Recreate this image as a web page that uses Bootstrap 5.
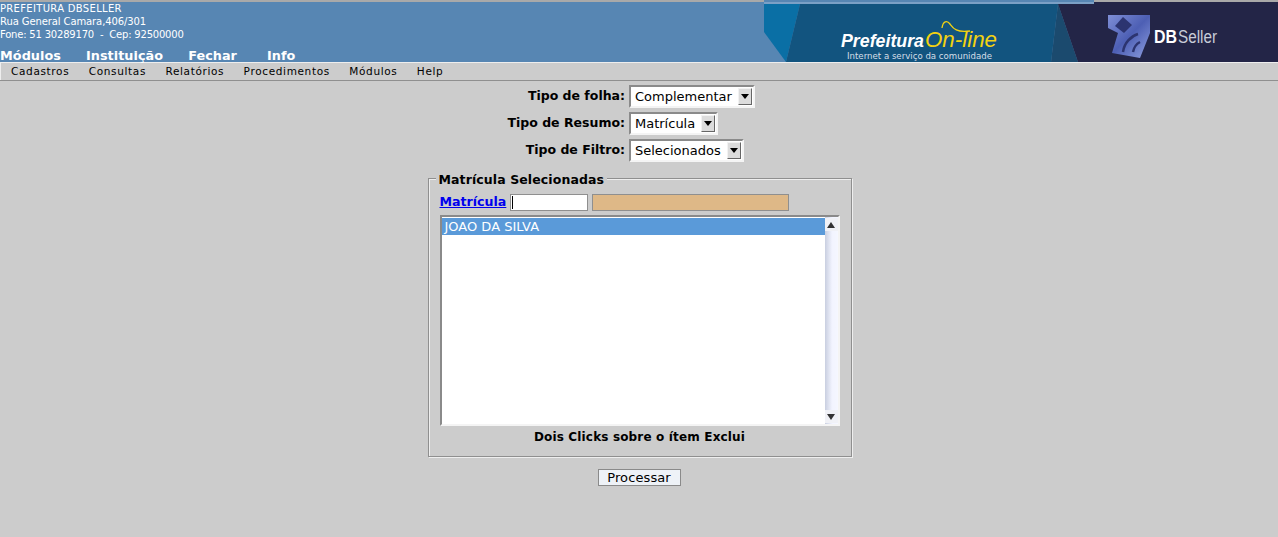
<!doctype html>
<html lang="pt">
<head>
<meta charset="utf-8">
<title>Prefeitura</title>
<link rel="stylesheet" href="https://cdn.jsdelivr.net/npm/bootstrap@5.3.0/dist/css/bootstrap.min.css">
<style>
html,body{height:100%}
body{background:#cccccc;font-family:"DejaVu Sans",sans-serif;color:#000;font-size:13px;overflow:hidden}
.hdr{height:62px;background:#5786b3;border-top:2px solid #a9a9a9;color:#fff}
.hdr-info{font-size:10px;line-height:13px;white-space:nowrap}
.hi1{letter-spacing:.32px}
.hi2{letter-spacing:-.1px}
.hi3{letter-spacing:-.2px}
.hdr-nav{font-size:12.8px;font-weight:700;line-height:15px;margin-top:7px;column-gap:25px;letter-spacing:.05px}
.nav-last{margin-left:5px}
.banner{width:514px;height:62px;margin-top:-2px;flex:none;display:block}
.submenu{height:19px;background:#cccccc;border-bottom:1px solid #8f8f8f;padding-left:11px;font-size:10.5px;line-height:18px;letter-spacing:.65px;column-gap:19.4px;box-shadow:inset 1px 1px 0 #eee}
.frm{padding-top:4px}
.sel-grid{width:100%;display:grid;grid-template-columns:625px auto;column-gap:4px;row-gap:4px;align-items:center}
.lbl{font-weight:700;font-size:12.5px;text-align:right}
.sel{height:23px;width:max-content;background:#fff;border:2px solid;border-color:#8a8a8a #f4f4f4 #f4f4f4 #8a8a8a;font-size:13px;padding-left:4px;column-gap:6px}
.sel-btn{width:14px;height:17px;background:#dcdcdc;border:1px solid;border-color:#f2f2f2 #666 #666 #f2f2f2;margin-right:1px}
.sel-btn::after{content:"";border:4px solid transparent;border-top:5px solid #000;border-bottom:0}
.fset{width:424px;height:279px;margin:16px 0 0 1px;border:1px solid #8f8f8f;box-shadow:inset 1px 1px 0 #eee,1px 1px 0 #eee;padding:15px 11px 0 11px;position:relative}
.fset-title{position:absolute;left:7px;top:-7px;background:#ccc;padding:0 3px;font-weight:700;font-size:12.5px;line-height:15px;letter-spacing:.1px}
.lnk{color:#0000ee;font-weight:700;text-decoration:underline;font-size:12.6px}
.fline{column-gap:4px;height:17px}
.inp1{width:78px;height:17px;background:#fff;border:1px solid #8f8f8f;padding:1px 0 1px 1px}
.inp1::before{content:"";display:block;width:1px;height:100%;background:#000}
.inp2{width:197px;height:17px;background:#deb887;border:1px solid #8f8f8f}
.lst{width:400px;height:211px;margin-top:4px;border:2px solid;border-color:#8a8a8a #f4f4f4 #f4f4f4 #8a8a8a;background:#fff;overflow:hidden}
.lst-body{flex:1 1 auto}
.lst-item{height:17px;background:#5a9ad9;color:#fff;font-size:13px;line-height:17px;padding-left:3px;margin:1px 0 0 0}
.sbar{width:13px;padding:1px 0;background:linear-gradient(90deg,#c9cfe0,#f2f4ff 55%,#f5f7ff)}
.sarrow{height:13px;background:#f0f1f6}
.up::after{content:"";border:4px solid transparent;border-bottom:6px solid #333;border-top:0}
.dn::after{content:"";border:4px solid transparent;border-top:6px solid #333;border-bottom:0}
.hint{font-weight:700;font-size:12px;line-height:15px;margin-top:4px;letter-spacing:.16px}
.proc{width:83px;height:17px;margin-top:12px;border:1px solid #8a8a8a;background:#eef2f7;color:#000;font-size:13px;line-height:15px;padding:0;border-radius:0;letter-spacing:.1px}
</style>
</head>
<body>
<header class="hdr d-flex justify-content-between">
  <div>
    <div class="hdr-info"><div class="hi1">PREFEITURA DBSELLER</div><div class="hi2">Rua General Camara,406/301</div><div class="hi3">Fone: 51 30289170&nbsp; -&nbsp; Cep: 92500000</div></div>
    <nav class="hdr-nav d-flex"><span>Módulos</span><span>Instituição</span><span>Fechar</span><span class="nav-last">Info</span></nav>
  </div>
  <svg class="banner" viewBox="0 0 514 62" role="img" aria-label="Prefeitura On-line DBSeller">
    <defs>
      <linearGradient id="lg" x1="0" y1="0" x2="1" y2="1"><stop offset="0" stop-color="#7f8fd6"/><stop offset=".5" stop-color="#4d5fb4"/><stop offset="1" stop-color="#8e9fe0"/></linearGradient>
    </defs>
    <rect width="330" height="62" fill="#5786b3"/>
    <rect y="2" width="330" height="2" fill="#7ba0c6"/>
    <polygon points="0,4 36,4 22,62 0,32" fill="#0a6fa5"/>
    <polygon points="36,4 294,4 287,62 22,62" fill="#12547f"/>
    <polygon points="294,4 314,62 287,62" fill="#1b4a6e"/>
    <polygon points="294,4 330,4 330,2 514,2 514,62 314,62" fill="#232547"/>
    <text x="77" y="47" font-family="Liberation Sans" font-style="italic" font-weight="700" font-size="19" textLength="83" lengthAdjust="spacingAndGlyphs" fill="#fff">Prefeitura</text>
    <text x="161" y="47" font-family="Liberation Sans" font-style="italic" font-size="22" textLength="72" lengthAdjust="spacingAndGlyphs" fill="#f3d211">On-line</text>
    <path d="M178 28C179 21 183 20 186 24S192 33 206 31" fill="none" stroke="#f3d211" stroke-width="1.3"/>
    <text x="83" y="59" font-family="DejaVu Sans" font-size="9" textLength="145" lengthAdjust="spacingAndGlyphs" fill="#d5dfe8">Internet a serviço da comunidade</text>
    <polygon points="344,15 386,15 386,33 376,58 348,53 354,33 344,28" fill="url(#lg)"/>
    <polygon points="359,17 368,25 360,33 351,26" fill="#2c3470"/>
    <path d="M359 52c1-9 8-16 15-18M369 52c1-5 3-8 7-10" fill="none" stroke="#2c3470" stroke-width="2.5"/>
    <text x="390" y="43" font-family="Liberation Sans" font-weight="700" font-size="18" textLength="23" lengthAdjust="spacingAndGlyphs" fill="#fff">DB</text>
    <text x="414" y="43" font-family="Liberation Sans" font-size="18" textLength="39" lengthAdjust="spacingAndGlyphs" fill="#c8ccd8">Seller</text>
  </svg>
</header>
<nav class="submenu d-flex"><span>Cadastros</span><span>Consultas</span><span>Relatórios</span><span>Procedimentos</span><span>Módulos</span><span>Help</span></nav>
<main class="frm d-flex flex-column align-items-center">
  <div class="sel-grid">
    <span class="lbl">Tipo de folha:</span><div class="sel d-flex align-items-center"><span>Complementar</span><span class="sel-btn d-flex align-items-center justify-content-center"></span></div>
    <span class="lbl">Tipo de Resumo:</span><div class="sel d-flex align-items-center"><span>Matrícula</span><span class="sel-btn d-flex align-items-center justify-content-center"></span></div>
    <span class="lbl">Tipo de Filtro:</span><div class="sel d-flex align-items-center"><span>Selecionados</span><span class="sel-btn d-flex align-items-center justify-content-center"></span></div>
  </div>
  <section class="fset">
    <div class="fset-title">Matrícula Selecionadas</div>
    <div class="fline d-flex align-items-center"><a href="#" class="lnk">Matrícula</a><span class="inp1"></span><span class="inp2"></span></div>
    <div class="lst d-flex">
      <div class="lst-body"><div class="lst-item">JOAO DA SILVA</div></div>
      <div class="sbar d-flex flex-column justify-content-between"><span class="sarrow up d-flex align-items-center justify-content-center"></span><span class="sarrow dn d-flex align-items-center justify-content-center"></span></div>
    </div>
    <div class="hint text-center">Dois Clicks sobre o ítem Exclui</div>
  </section>
  <button class="btn proc" type="button">Processar</button>
</main>
<script src="https://cdn.jsdelivr.net/npm/bootstrap@5.3.0/dist/js/bootstrap.bundle.min.js"></script>
</body>
</html>
